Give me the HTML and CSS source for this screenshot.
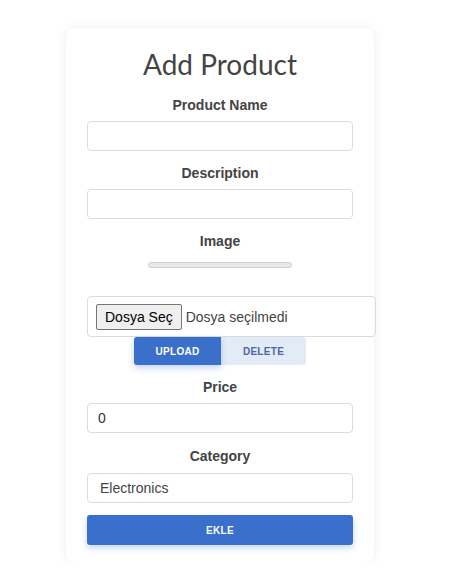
FILE: index.html
```html
<!DOCTYPE html>
<html lang="tr">
<head>
<meta charset="utf-8">
<title>Add Product</title>
<link rel="stylesheet" href="styles.css">
</head>
<body>
<div class="page">
  <form class="card">
    <h1 class="title">Add Product</h1>

    <div class="field">
      <label class="label">Product Name</label>
      <input class="input" type="text">
    </div>

    <div class="field">
      <label class="label">Description</label>
      <input class="input" type="text">
    </div>

    <div class="field">
      <label class="label">Image</label>
      <div class="progress"></div>
      <div class="filebox">
        <span class="filebtn">Dosya Seç</span>
        <span class="filename">Dosya seçilmedi</span>
      </div>
      <div class="btngroup">
        <button type="button" class="btn btn-upload">UPLOAD</button>
        <button type="button" class="btn btn-delete">DELETE</button>
      </div>
    </div>

    <div class="field field-price">
      <label class="label">Price</label>
      <div class="input input-text">0</div>
    </div>

    <div class="field field-cat">
      <label class="label">Category</label>
      <div class="input input-select">Electronics</div>
    </div>

    <button type="button" class="submit">EKLE</button>
  </form>
</div>
</body>
</html>
```

FILE: styles.css
```css
* { box-sizing: border-box; }

html, body {
  margin: 0;
  padding: 0;
  background: #ffffff;
}

body {
  font-family: "Liberation Sans", Arial, sans-serif;
  color: #444;
}

.page {
  padding-top: 28px;
  padding-left: 66px;
}

.card {
  width: 308px;
  height: 535px;
  background: #fff;
  border-radius: 10px;
  box-shadow: 0 0 12px rgba(0, 0, 0, 0.07);
  padding: 19px 21px 18px;
  display: flex;
  flex-direction: column;
}

.title {
  margin: 0 0 16px;
  font-family: Lato, "Liberation Sans", sans-serif;
  font-weight: 400;
  font-size: 28px;
  line-height: 34px;
  text-align: center;
  color: #444;
}

.field {
  display: flex;
  flex-direction: column;
  align-items: center;
  margin-bottom: 14px;
}

.field-price { margin-bottom: 15px; }
.field-cat { margin-bottom: 12px; }

.label {
  display: block;
  font-weight: 700;
  font-size: 14px;
  line-height: 17px;
  margin-bottom: 7px;
  color: #444;
}

.input {
  display: block;
  width: 266px;
  height: 30px;
  border: 1px solid #dcdcdc;
  border-radius: 4px;
  background: #fff;
  font-family: "Liberation Sans", Arial, sans-serif;
  font-size: 14px;
  color: #333;
  outline: none;
  align-self: flex-start;
}

.input-text {
  padding: 0 10px;
  line-height: 28px;
}

.input-select {
  padding: 0 12px;
  line-height: 28px;
  color: #444;
}

.field-cat .label { margin-bottom: 8px; }

.progress {
  width: 144px;
  height: 6px;
  margin-top: 5px;
  border: 1px solid #d0d0d0;
  border-radius: 3px;
  background: #e9e9e9;
}

.filebox {
  align-self: flex-start;
  margin-top: 28px;
  width: 289px;
  height: 41px;
  border: 1px solid #dcdcdc;
  border-radius: 4px;
  padding: 6px 8px;
  display: flex;
  align-items: center;
  font-size: 14px;
}

.filebtn {
  display: inline-block;
  height: 26px;
  line-height: 24px;
  padding: 0 8px;
  border: 1px solid #767676;
  border-radius: 2px;
  background: #efefef;
  color: #000;
  font-size: 14px;
  margin-right: 4px;
}

.filename {
  color: #444;
}

.btngroup {
  display: flex;
  height: 28px;
}

.btn {
  border: none;
  margin: 0;
  height: 28px;
  font-family: "Liberation Sans", Arial, sans-serif;
  font-weight: 700;
  font-size: 10px;
  letter-spacing: 0.3px;
  padding: 0;
  cursor: pointer;
}

.btn-upload {
  width: 87px;
  background: #3a6fcb;
  color: #fff;
  border-radius: 3px 0 0 3px;
  box-shadow: 0 3px 6px rgba(58, 111, 203, 0.3);
  position: relative;
}

.btn-delete {
  width: 85px;
  background: #e3ebf6;
  color: #4a68a6;
  border-radius: 0 3px 3px 0;
}

.submit {
  width: 266px;
  height: 30px;
  border: none;
  border-radius: 3px;
  background: #3a6fcb;
  color: #fff;
  font-family: "Liberation Sans", Arial, sans-serif;
  font-weight: 700;
  font-size: 10px;
  letter-spacing: 0.3px;
  box-shadow: 0 3px 6px rgba(58, 111, 203, 0.3);
  cursor: pointer;
}
```
